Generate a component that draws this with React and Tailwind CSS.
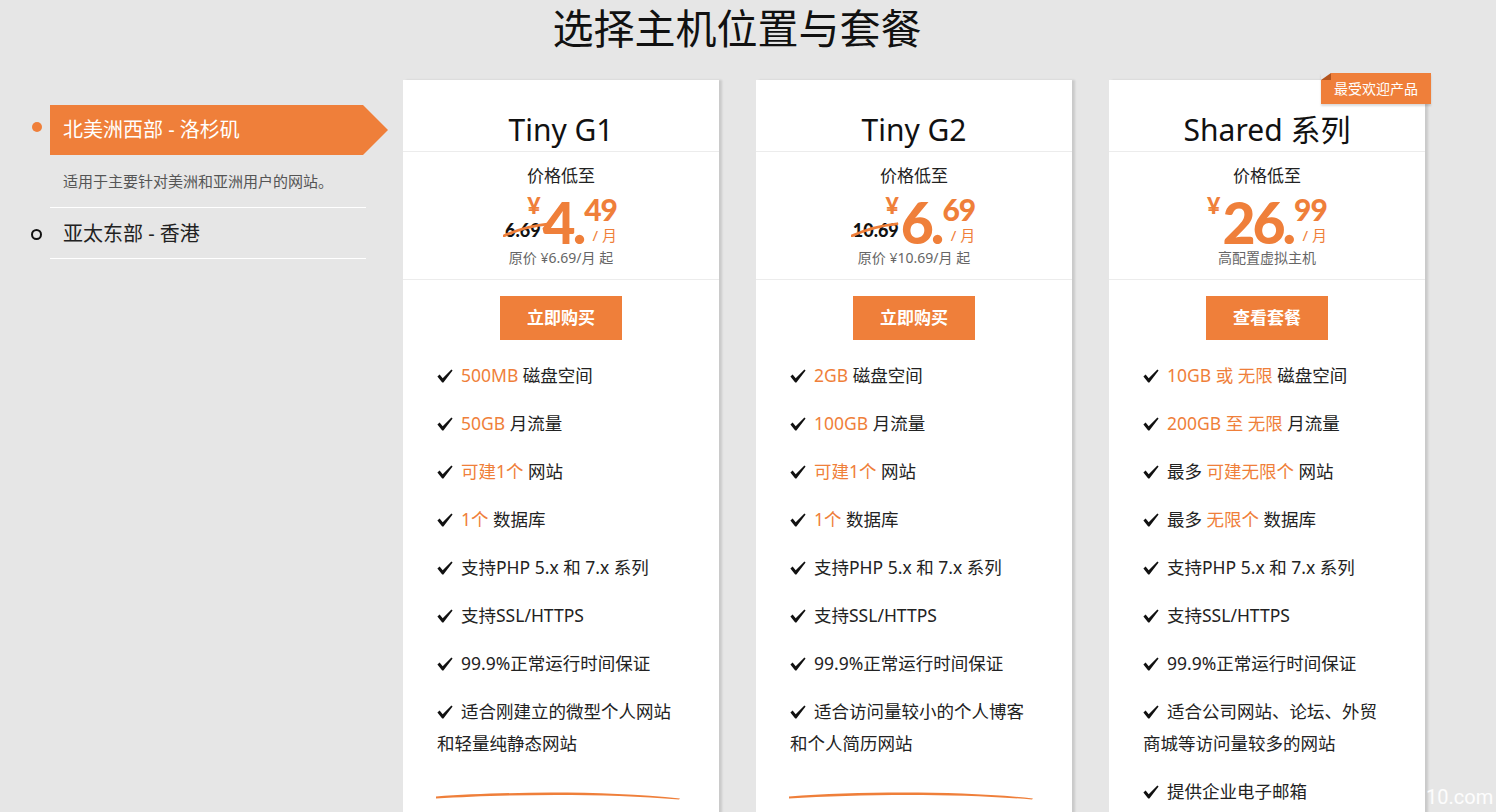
import { Fragment } from "react";

const font = { fontFamily: '"Noto Sans", "Noto Sans CJK SC", sans-serif' };

const plans = [
  {
    name: "Tiny G1",
    old: "6.69",
    big: "4",
    cents: "49",
    note: "原价 ¥6.69/月 起",
    button: "立即购买",
    features: [
      [["o", "500MB"], ["k", " 磁盘空间"]],
      [["o", "50GB"], ["k", " 月流量"]],
      [["o", "可建1个"], ["k", " 网站"]],
      [["o", "1个"], ["k", " 数据库"]],
      [["k", "支持PHP 5.x 和 7.x 系列"]],
      [["k", "支持SSL/HTTPS"]],
      [["k", "99.9%正常运行时间保证"]],
      [["k", "适合刚建立的微型个人网站"], ["br"], ["k", "和轻量纯静态网站"]],
    ],
    swoosh: true,
  },
  {
    name: "Tiny G2",
    old: "10.69",
    big: "6",
    cents: "69",
    note: "原价 ¥10.69/月 起",
    button: "立即购买",
    features: [
      [["o", "2GB"], ["k", " 磁盘空间"]],
      [["o", "100GB"], ["k", " 月流量"]],
      [["o", "可建1个"], ["k", " 网站"]],
      [["o", "1个"], ["k", " 数据库"]],
      [["k", "支持PHP 5.x 和 7.x 系列"]],
      [["k", "支持SSL/HTTPS"]],
      [["k", "99.9%正常运行时间保证"]],
      [["k", "适合访问量较小的个人博客"], ["br"], ["k", "和个人简历网站"]],
    ],
    swoosh: true,
  },
  {
    name: "Shared 系列",
    old: null,
    big: "26",
    cents: "99",
    note: "高配置虚拟主机",
    button: "查看套餐",
    popular: true,
    features: [
      [["o", "10GB 或 无限"], ["k", " 磁盘空间"]],
      [["o", "200GB 至 无限"], ["k", " 月流量"]],
      [["k", "最多 "], ["o", "可建无限个"], ["k", " 网站"]],
      [["k", "最多 "], ["o", "无限个"], ["k", " 数据库"]],
      [["k", "支持PHP 5.x 和 7.x 系列"]],
      [["k", "支持SSL/HTTPS"]],
      [["k", "99.9%正常运行时间保证"]],
      [["k", "适合公司网站、论坛、外贸"], ["br"], ["k", "商城等访问量较多的网站"]],
      [["k", "提供企业电子邮箱"]],
    ],
  },
];

const Check = () => (
  <svg viewBox="0 0 16 14" className="inline-block w-[16px] h-[14px] mr-[8px] align-[-1px]">
    <path d="M0.4 7.6 L2.6 5.6 L5.7 9.2 L14.4 0.4 L15.6 1.4 L6.4 13.6 L5.2 13.6 Z" fill="#111" />
  </svg>
);

const Swoosh = () => (
  <svg viewBox="0 0 246 10" className="w-[246px] h-[10px] mt-[31px] ml-[-2px]">
    <path d="M1 6.5 C70 1.5 170 0.5 245 8.5 L244 9.5 C170 3 70 4 1 8.5 Z" fill="#ef7f3a" />
  </svg>
);

const Price = ({ plan }) => (
  <div className="flex items-start justify-center mt-[5px] h-[54px]" style={{ fontFamily: "Lato, sans-serif" }}>
    <div className="flex flex-col items-end">
      <span className="text-[23px] leading-none font-black text-[#ef7f3a]">¥</span>
      {plan.old && (
        <span className="relative mt-[4px] text-[18px] leading-none font-black text-[#111]">
          {plan.old}
          <svg viewBox="0 0 50 14" className="absolute left-[-2px] top-[0px] w-[48px] h-[16px]" preserveAspectRatio="none">
            <path d="M1 13 C14 8 30 4 48 2.5" stroke="#ef7f3a" strokeWidth="2.6" fill="none" strokeLinecap="round" />
          </svg>
        </span>
      )}
    </div>
    <span className="ml-[2px] text-[57px] leading-none font-black text-[#ef7f3a] tracking-[-3px]">
      {plan.big}.
    </span>
    <div className="flex flex-col items-end ml-[1px]">
      <span className="text-[30px] leading-none font-black text-[#ef7f3a] tracking-[-1px]">{plan.cents}</span>
      <span className="mt-[4px] text-[15px] leading-none text-[#ef7f3a]" style={font}>/ 月</span>
    </div>
  </div>
);

const Card = ({ plan }) => (
  <div className="relative w-[316px] shrink-0 bg-white pb-[60px] shadow-[3px_0_2px_rgba(0,0,0,0.12)]">
    {plan.popular && (
      <div className="absolute top-[-7px] right-[-6px]">
        <div className="relative bg-[#ef7f3a] text-white text-[14px] leading-[31px] h-[31px] w-[110px] text-center shadow-[0_2px_2px_rgba(0,0,0,0.15)]">
          最受欢迎产品
          <div className="absolute left-0 top-0 w-0 h-0 border-t-[7px] border-t-[#e6e6e6] border-r-[10px] border-r-[#b4531c]" />
        </div>
      </div>
    )}
    <div className="h-[72px] pt-[28px] text-center text-[30px] leading-[44px] text-[#111] border-b border-[#ececec]">
      {plan.name}
    </div>
    <div className="pt-[11px] pb-[11px] border-b border-[#ececec] text-center">
      <div className="text-[17px] leading-[26px] text-[#222]">价格低至</div>
      <Price plan={plan} />
      <div className="text-[14px] leading-[20px] text-[#666]">{plan.note}</div>
    </div>
    <div className="flex justify-center mt-[16px]">
      <button className="w-[122px] h-[44px] bg-[#ef7f3a] text-white text-[17px] font-bold">{plan.button}</button>
    </div>
    <ul className="mt-[19px] pl-[34px] pr-[20px] flex flex-col gap-[16px]">
      {plan.features.map((f, i) => (
        <li key={i} className="text-[17.5px] leading-[32px] text-[#222] whitespace-nowrap">
          <Check />
          {f.map((p, j) =>
            p[0] === "br" ? (
              <br key={j} />
            ) : (
              <span key={j} className={p[0] === "o" ? "text-[#ef7f3a]" : ""}>
                {p[1]}
              </span>
            )
          )}
        </li>
      ))}
    </ul>
    {plan.swoosh && (
      <div className="pl-[34px]">
        <Swoosh />
      </div>
    )}
  </div>
);

export default function App() {
  return (
    <div className="relative h-[812px] overflow-hidden bg-[#e6e6e6]" style={font}>
      <h1 className="text-center text-[41px] leading-[56px] text-[#111] pr-[22px]">选择主机位置与套餐</h1>
      <div className="flex mt-[24px]">
        <div className="w-[403px] shrink-0 pt-[25px] pl-[50px]">
          <div className="relative w-[316px] pb-[15px] border-b border-white">
            <span className="absolute left-[-18px] top-[17px] w-[10px] h-[10px] rounded-full bg-[#ef7f3a]" />
            <div className="w-[338px] h-[50px] bg-[#ef7f3a] text-white text-[20px] leading-[50px] pl-[13px] [clip-path:polygon(0_0,calc(100%-25px)_0,100%_50%,calc(100%-25px)_100%,0_100%)]">
              北美洲西部 - 洛杉矶
            </div>
            <div className="mt-[15px] pl-[13px] text-[15px] leading-[22px] text-[#555]">
              适用于主要针对美洲和亚洲用户的网站。
            </div>
          </div>
          <div className="relative w-[316px] mt-[11px] pb-[9px] border-b border-white">
            <span className="absolute left-[-19px] top-[10px] w-[11px] h-[11px] rounded-full border-2 border-[#111]" />
            <div className="pl-[13px] text-[20px] leading-[30px] text-[#222]">亚太东部 - 香港</div>
          </div>
        </div>
        <div className="flex gap-[37px]">
          {plans.map(p => (
            <Card key={p.name} plan={p} />
          ))}
        </div>
      </div>
      <div className="absolute left-[1426px] top-[783px] text-[20px] leading-[28px] text-white/90" style={{ fontFamily: "Roboto, sans-serif" }}>
        10.com
      </div>
    </div>
  );
}
